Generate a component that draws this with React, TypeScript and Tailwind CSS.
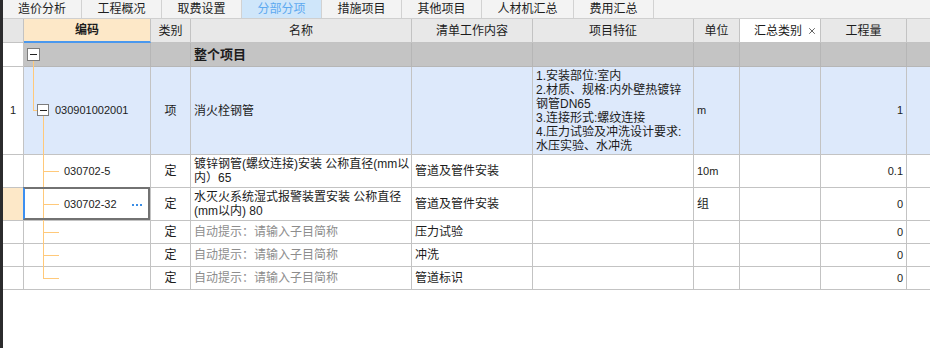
import React from "react";
import { X } from "lucide-react";

const cjk = "font-['Liberation_Sans','Noto_Sans_CJK_SC',sans-serif]";

const tabs = [
  { label: "造价分析", w: "w-[79px]" },
  { label: "工程概况", w: "w-[80px]" },
  { label: "取费设置", w: "w-[80px]" },
  { label: "分部分项", w: "w-[80px]", active: true },
  { label: "措施项目", w: "w-[80px]" },
  { label: "其他项目", w: "w-[80px]" },
  { label: "人材机汇总", w: "w-[92px]" },
  { label: "费用汇总", w: "w-[80px]" },
];

function Cell({
  className = "",
  children,
}: {
  className?: string;
  children?: React.ReactNode;
}) {
  return (
    <div
      className={
        "relative flex items-center border-r border-b border-[#c3c3c3] " +
        className
      }
    >
      {children}
    </div>
  );
}

function MinusBox({ className = "" }: { className?: string }) {
  return (
    <span
      className={
        "absolute flex items-center justify-center border border-[#7c7c7c] bg-white " +
        className
      }
    >
      <span className="block w-[7px] h-px bg-[#222]" />
    </span>
  );
}

// a child row of the tree: vertical guide at x 19 plus a branch at the row middle
function Branch({ mid, last }: { mid: number; last?: boolean }) {
  return (
    <>
      <span
        className={
          "absolute left-[19px] top-0 w-px bg-[#ffc97a] " +
          (last ? "" : "bottom-[-1px]")
        }
        style={last ? { height: mid + 1 } : undefined}
      />
      <span
        className="absolute left-[19px] w-[16px] h-px bg-[#ffc97a]"
        style={{ top: mid }}
      />
    </>
  );
}

const hint = "自动提示：请输入子目简称";

export default function App() {
  return (
    <div className={"flex w-[930px] h-[348px] bg-white text-[12px] text-[#1c1c1c] " + cjk}>
      <div className="w-[3px] shrink-0 bg-[#2b2b2d]" />
      <div className="flex-1 flex flex-col">
        {/* tab strip */}
        <div className="flex h-[19px] bg-[#f3f3f3] border-b border-[#cfcfcf]">
          {tabs.map((t) => (
            <div
              key={t.label}
              className={
                "flex items-center justify-center border-r border-[#d2d2d2] text-[12px] leading-none " +
                t.w +
                (t.active ? " bg-[#cfe6fa] text-[#5ea9f0]" : " text-[#1e1e1e]")
              }
            >
              {t.label}
            </div>
          ))}
        </div>

        <div className="grid grid-cols-[21px_127px_40px_221px_121px_161px_46px_81px_86px_1fr] grid-rows-[24px_24px_88px_33px_33px_23px_23px_23px]">
          {/* header */}
          <Cell className="bg-[#e6e6e6]" />
          <Cell className="justify-center bg-[#fde8c8] font-bold !border-b-2 !border-b-[#4a98ee]">
            编码
          </Cell>
          <Cell className="justify-center bg-[#e8e8e8]">类别</Cell>
          <Cell className="justify-center bg-[#e8e8e8]">名称</Cell>
          <Cell className="justify-center bg-[#e8e8e8]">清单工作内容</Cell>
          <Cell className="justify-center bg-[#e8e8e8]">项目特征</Cell>
          <Cell className="justify-center bg-[#e8e8e8]">单位</Cell>
          <Cell className="justify-end gap-[5px] pr-[3px] bg-white">
            汇总类别
            <X size={10} strokeWidth={2.2} className="text-[#555]" />
          </Cell>
          <Cell className="justify-center bg-[#e8e8e8]">工程量</Cell>
          <div className="border-b border-[#c3c3c3] bg-[#e8e8e8]" />

          {/* 整个项目 */}
          <Cell className="bg-white" />
          <Cell className="bg-[#c4c4c4] !border-[#b6b6b6]">
            <MinusBox className="left-[3px] top-[5px] w-[13px] h-[13px]" />
            <span className="absolute left-[9px] top-[18px] bottom-[-1px] w-px bg-[#ffc97a]" />
          </Cell>
          <Cell className="bg-[#c4c4c4] !border-[#b6b6b6]" />
          <Cell className="bg-[#c4c4c4] !border-[#b6b6b6] pl-[3px] font-bold text-[13px]">
            整个项目
          </Cell>
          <Cell className="bg-[#c4c4c4] !border-[#b6b6b6]" />
          <Cell className="bg-[#c4c4c4] !border-[#b6b6b6]" />
          <Cell className="bg-[#c4c4c4] !border-[#b6b6b6]" />
          <Cell className="bg-[#c4c4c4] !border-[#b6b6b6]" />
          <Cell className="bg-[#c4c4c4] !border-[#b6b6b6]" />
          <div className="border-b border-[#b6b6b6] bg-[#c4c4c4]" />

          {/* row 1 */}
          <Cell className="justify-center bg-white text-[11px]">1</Cell>
          <Cell className="bg-[#dde9fb] pl-[31px] text-[11px]">
            <span className="absolute left-[9px] top-0 h-[44px] w-px bg-[#ffc97a]" />
            <span className="absolute left-[9px] top-[43px] w-[4px] h-px bg-[#ffc97a]" />
            <MinusBox className="left-[13px] top-[37px] w-[12px] h-[12px]" />
            <span className="absolute left-[19px] top-[49px] bottom-[-1px] w-px bg-[#ffc97a]" />
            030901002001
          </Cell>
          <Cell className="justify-center bg-[#dde9fb]">项</Cell>
          <Cell className="bg-[#dde9fb] pl-[3px]">消火栓钢管</Cell>
          <Cell className="bg-[#dde9fb]" />
          <Cell className="bg-[#dde9fb] pl-[3px] leading-[14px] whitespace-nowrap">
            <div>
              1.安装部位:室内
              <br />
              2.材质、规格:内外壁热镀锌
              <br />
              钢管DN65
              <br />
              3.连接形式:螺纹连接
              <br />
              4.压力试验及冲洗设计要求:
              <br />
              水压实验、水冲洗
            </div>
          </Cell>
          <Cell className="bg-[#dde9fb] pl-[3px] text-[11px]">m</Cell>
          <Cell className="bg-[#dde9fb]" />
          <Cell className="justify-end bg-[#dde9fb] pr-[3px] text-[11px]">1</Cell>
          <div className="border-b border-[#c3c3c3] bg-[#dde9fb]" />

          {/* row 2 */}
          <Cell className="bg-white" />
          <Cell className="bg-white pl-[40px] text-[11px]">
            <Branch mid={16} />
            030702-5
          </Cell>
          <Cell className="justify-center bg-white">定</Cell>
          <Cell className="bg-white pl-[3px] leading-[14px] whitespace-nowrap">
            <div>
              镀锌钢管(螺纹连接)安装 公称直径(mm以
              <br />
              内）65
            </div>
          </Cell>
          <Cell className="bg-white pl-[3px]">管道及管件安装</Cell>
          <Cell className="bg-white" />
          <Cell className="bg-white pl-[3px] text-[11px]">10m</Cell>
          <Cell className="bg-white" />
          <Cell className="justify-end bg-white pr-[3px] text-[11px]">0.1</Cell>
          <div className="border-b border-[#c3c3c3]" />

          {/* row 3, selected */}
          <Cell className="bg-[#fde8c8]" />
          <Cell className="bg-white pl-[40px] text-[11px]">
            <Branch mid={16} />
            030702-32
            <span className="absolute left-[108px] top-[16px] flex gap-[2px]">
              <span className="w-[2px] h-[2px] bg-[#3b8ee6]" />
              <span className="w-[2px] h-[2px] bg-[#3b8ee6]" />
              <span className="w-[2px] h-[2px] bg-[#3b8ee6]" />
            </span>
            <span className="absolute -top-px -left-px right-0 bottom-0 border-2 border-[#727272] border-l-[#3d8ff0]" />
          </Cell>
          <Cell className="justify-center bg-white">定</Cell>
          <Cell className="bg-white pl-[3px] leading-[14px] whitespace-nowrap">
            <div>
              水灭火系统湿式报警装置安装 公称直径
              <br />
              (mm以内) 80
            </div>
          </Cell>
          <Cell className="bg-white pl-[3px]">管道及管件安装</Cell>
          <Cell className="bg-white" />
          <Cell className="bg-white pl-[3px]">组</Cell>
          <Cell className="bg-white" />
          <Cell className="justify-end bg-white pr-[3px] text-[11px]">0</Cell>
          <div className="border-b border-[#c3c3c3]" />

          {/* rows 4-6 */}
          {["压力试验", "冲洗", "管道标识"].map((work, i) => (
            <React.Fragment key={work}>
              <Cell className="bg-white" />
              <Cell className="bg-white">
                <Branch mid={11} last={i === 2} />
              </Cell>
              <Cell className="justify-center bg-white">定</Cell>
              <Cell className="bg-white pl-[3px] text-[#8d8d8d]">{hint}</Cell>
              <Cell className="bg-white pl-[3px]">{work}</Cell>
              <Cell className="bg-white" />
              <Cell className="bg-white" />
              <Cell className="bg-white" />
              <Cell className="justify-end bg-white pr-[3px] text-[11px]">0</Cell>
              <div className="border-b border-[#c3c3c3]" />
            </React.Fragment>
          ))}
        </div>
        <div className="flex-1 bg-white" />
      </div>
    </div>
  );
}
